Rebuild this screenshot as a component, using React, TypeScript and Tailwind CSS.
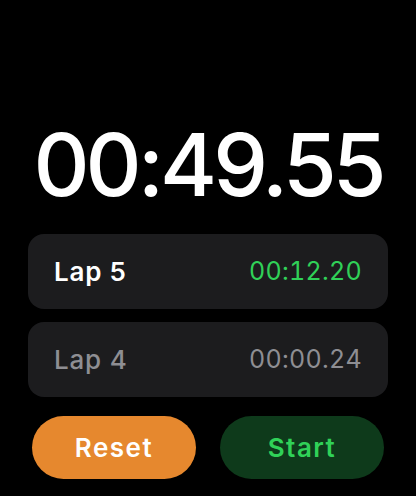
import React from "react";

type Lap = { label: string; time: string; current?: boolean };

const laps: Lap[] = [
  { label: "Lap 5", time: "00:12.20", current: true },
  { label: "Lap 4", time: "00:00.24" },
];

function LapRow({ lap }: { lap: Lap }) {
  return (
    <div className="flex h-[75px] items-center justify-between rounded-[16px] bg-[#1c1c1e] px-[26px]">
      <span
        className={
          lap.current
            ? "text-[26px] font-semibold tracking-[0.8px] text-white"
            : "text-[26px] font-medium tracking-[0.8px] text-[#8e8e93]"
        }
      >
        {lap.label}
      </span>
      <span
        className={
          lap.current
            ? "text-[25px] tracking-[0.3px] tabular-nums text-[#30d158]"
            : "text-[25px] tracking-[0.3px] tabular-nums text-[#8e8e93]"
        }
      >
        {lap.time}
      </span>
    </div>
  );
}

export default function App() {
  return (
    <div
      className="flex h-[496px] w-[416px] flex-col bg-black"
      style={{ fontFamily: "Inter, 'Noto Sans', sans-serif" }}
    >
      {/* elapsed time */}
      <div className="mt-[118px] flex h-[92px] items-center justify-center text-[87px] leading-none font-medium tracking-[-4px] text-white">
        00:49.55
      </div>

      {/* laps */}
      <div className="mt-[24px] flex flex-col gap-[13px] px-[28px]">
        {laps.map((lap) => (
          <LapRow key={lap.label} lap={lap} />
        ))}
      </div>

      {/* controls */}
      <div className="mt-[19px] flex justify-between px-[32px]">
        <button className="h-[63px] w-[164px] rounded-full bg-[#e6882e] text-[26px] font-semibold tracking-[1.5px] text-white">
          Reset
        </button>
        <button className="h-[63px] w-[164px] rounded-full bg-[#0e3a1b] text-[26px] font-semibold tracking-[1.5px] text-[#30d158]">
          Start
        </button>
      </div>
    </div>
  );
}
